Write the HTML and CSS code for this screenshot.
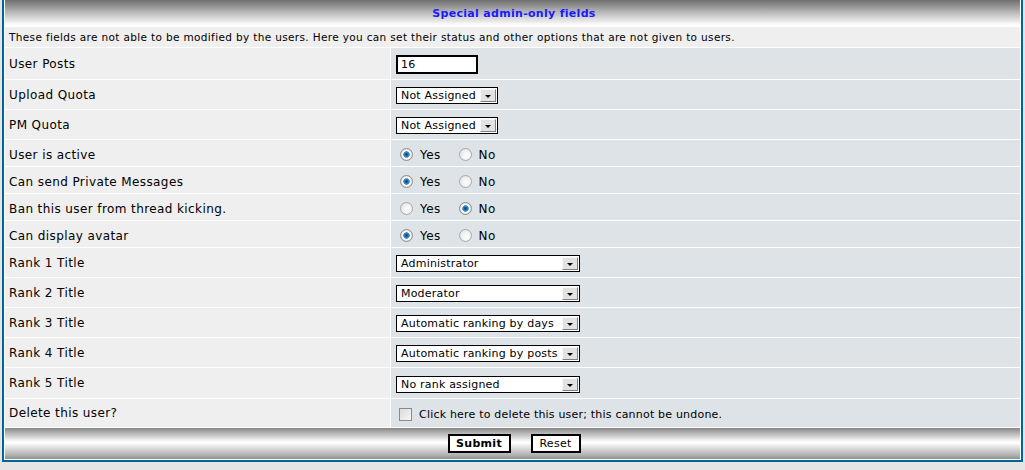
FILE: index.html
```html
<!DOCTYPE html>
<html>
<head>
<meta charset="utf-8">
<title>Special admin-only fields</title>
<link rel="stylesheet" href="styles.css">
</head>
<body>
<div class="page">
<table class="forumline">
  <colgroup><col class="c-label"><col class="c-value"></colgroup>
  <tr class="r-head"><th colspan="2">Special admin-only fields</th></tr>
  <tr class="r-desc"><td colspan="2" class="row1 gensmall">These fields are not able to be modified by the users. Here you can set their status and other options that are not given to users.</td></tr>
  <tr class="r-input">
    <td class="row1 gen">User Posts</td>
    <td class="row2"><input class="post" type="text" value="16"></td>
  </tr>
  <tr class="r-select">
    <td class="row1 gen">Upload Quota</td>
    <td class="row2"><span class="select w-quota"><span class="opt">Not Assigned</span><span class="btn"><i class="arrow"></i></span></span></td>
  </tr>
  <tr class="r-select">
    <td class="row1 gen">PM Quota</td>
    <td class="row2"><span class="select w-quota"><span class="opt">Not Assigned</span><span class="btn"><i class="arrow"></i></span></span></td>
  </tr>
  <tr class="r-radio">
    <td class="row1 gen">User is active</td>
    <td class="row2 gen"><span class="choice"><input class="radio" type="radio" name="active" checked><span>Yes</span></span><span class="choice"><input class="radio" type="radio" name="active"><span>No</span></span></td>
  </tr>
  <tr class="r-radio">
    <td class="row1 gen">Can send Private Messages</td>
    <td class="row2 gen"><span class="choice"><input class="radio" type="radio" name="pm" checked><span>Yes</span></span><span class="choice"><input class="radio" type="radio" name="pm"><span>No</span></span></td>
  </tr>
  <tr class="r-radio">
    <td class="row1 gen">Ban this user from thread kicking.</td>
    <td class="row2 gen"><span class="choice"><input class="radio" type="radio" name="kick"><span>Yes</span></span><span class="choice"><input class="radio" type="radio" name="kick" checked><span>No</span></span></td>
  </tr>
  <tr class="r-radio">
    <td class="row1 gen">Can display avatar</td>
    <td class="row2 gen"><span class="choice"><input class="radio" type="radio" name="avatar" checked><span>Yes</span></span><span class="choice"><input class="radio" type="radio" name="avatar"><span>No</span></span></td>
  </tr>
  <tr class="r-select">
    <td class="row1 gen">Rank 1 Title</td>
    <td class="row2"><span class="select w-rank"><span class="opt">Administrator</span><span class="btn"><i class="arrow"></i></span></span></td>
  </tr>
  <tr class="r-select">
    <td class="row1 gen">Rank 2 Title</td>
    <td class="row2"><span class="select w-rank"><span class="opt">Moderator</span><span class="btn"><i class="arrow"></i></span></span></td>
  </tr>
  <tr class="r-select">
    <td class="row1 gen">Rank 3 Title</td>
    <td class="row2"><span class="select w-rank"><span class="opt">Automatic ranking by days</span><span class="btn"><i class="arrow"></i></span></span></td>
  </tr>
  <tr class="r-select">
    <td class="row1 gen">Rank 4 Title</td>
    <td class="row2"><span class="select w-rank"><span class="opt">Automatic ranking by posts</span><span class="btn"><i class="arrow"></i></span></span></td>
  </tr>
  <tr class="r-select r-last">
    <td class="row1 gen">Rank 5 Title</td>
    <td class="row2"><span class="select w-rank"><span class="opt">No rank assigned</span><span class="btn"><i class="arrow"></i></span></span></td>
  </tr>
  <tr class="r-delete">
    <td class="row1 gen">Delete this user?</td>
    <td class="row2 gen"><span class="choice choice-del"><input class="check" type="checkbox"><span class="del-text">Click here to delete this user; this cannot be undone.</span></span></td>
  </tr>
  <tr class="r-foot">
    <td colspan="2" class="catBottom"><div class="buttons"><input type="submit" class="mainoption" value="Submit"><input type="reset" class="liteoption" value="Reset"></div></td>
  </tr>
</table>
</div>
</body>
</html>
```
FILE: styles.css
```css
html, body {
  margin: 0;
  padding: 0;
  background: #E5E5E5;
}
body {
  font-family: "DejaVu Sans", Verdana, sans-serif;
  color: #000;
}
.page {
  padding: 0 0 0 2px;
  margin-top: -1px;
}
.forumline {
  width: 1021px;
  table-layout: fixed;
  border-collapse: separate;
  border-spacing: 1px;
  background: #FFFFFF;
  border: 2px solid #006699;
  border-top-width: 0;
}
.c-label { width: 385px; }
.forumline td, .forumline th {
  padding: 0 4px;
  vertical-align: middle;
}
.r-head th {
  height: 26px;
  padding: 0 0 0 3px;
  font-size: 11px;
  font-weight: bold;
  letter-spacing: 0.3px;
  color: #1a1aff;
  text-align: center;
  background: linear-gradient(#6f6f6f 0%, #8d8d8d 20%, #b5b5b5 45%, #d9d9d9 70%, #eeeeee 86%, #fbfbfb 92%, #ffffff 100%);
}
.row1 { background: #EFEFEF; }
.row2 { background: #DEE3E7; }
.gen { font-size: 12px; letter-spacing: 0.4px; }
.gensmall { font-size: 10.5px; letter-spacing: 0.35px; }
.r-desc { height: 20px; }
.r-input { height: 31px; }
.r-select { height: 29px; }
.r-last { height: 30px; }
.r-radio { height: 26px; }
.r-radio td { padding-top: 3px; }
.r-delete { height: 28px; }
.r-delete td.row2 { padding-top: 2px; }
.r-foot { height: 31px; }

input.post {
  box-sizing: border-box;
  width: 82px;
  height: 19px;
  margin: 0 0 0 1px;
  padding: 0 0 0 3px;
  border: 2px solid #000;
  background: #fff;
  font-family: "DejaVu Sans", Verdana, sans-serif;
  font-size: 11px;
  letter-spacing: 0.3px;
  color: #000;
  vertical-align: middle;
}

.select {
  box-sizing: border-box;
  display: inline-flex;
  align-items: stretch;
  height: 17px;
  margin-left: 1px;
  border: 1px solid #000;
  background: #fff;
  font-size: 11px;
  letter-spacing: 0.2px;
  vertical-align: middle;
}
.w-quota { width: 102px; }
.w-rank { width: 184px; }
.select .opt {
  flex: 1;
  padding-left: 4px;
  line-height: 15px;
  white-space: nowrap;
  overflow: hidden;
}
.select .btn {
  display: flex;
  align-items: flex-end;
  justify-content: center;
  box-sizing: border-box;
  width: 16px;
  margin: 1px;
  padding-bottom: 3px;
  border: 1px solid;
  border-color: #f8f8f8 #808080 #808080 #f8f8f8;
  background: #e2e2e2;
}
.arrow {
  display: block;
  width: 0;
  height: 0;
  border-left: 3px solid transparent;
  border-right: 3px solid transparent;
  border-top: 3px solid #000;
}

.choice {
  display: inline-flex;
  align-items: center;
  gap: 7px;
  margin-right: 13px;
  vertical-align: middle;
}
.radio {
  appearance: none;
  -webkit-appearance: none;
  box-sizing: border-box;
  width: 13px;
  height: 13px;
  margin: 0 0 0 5px;
  border-radius: 50%;
  border: 1px solid #a8a8a8;
  background: radial-gradient(circle at 60% 60%, #ffffff 0, #f4f4f4 40%, #dcdcdc 100%);
}
.radio:checked {
  border-color: #8e8e8e;
  background: radial-gradient(circle at 50% 50%, #0a3f6e 0, #1c69a8 1.5px, #4c9bd6 3px, #ffffff 3.6px, #f2f2f2 4.5px, #d4d4d4 6px);
}
.check {
  appearance: none;
  -webkit-appearance: none;
  box-sizing: border-box;
  width: 13px;
  height: 13px;
  margin: 0 0 0 4px;
  border: 1px solid #8a8a8a;
  background: linear-gradient(135deg, #dcdcdc, #f6f6f6);
}
.choice-del { gap: 7px; }
.del-text { font-size: 11px; letter-spacing: 0.2px; }

.catBottom {
  background: linear-gradient(#868686 0%, #a9a9a9 12%, #d2d2d2 28%, #f4f4f4 40%, #ffffff 48%, #eaeaea 58%, #cfcfcf 72%, #b0b0b0 88%, #8f8f8f 100%);
}
.buttons {
  display: flex;
  justify-content: center;
  gap: 20px;
  padding-left: 3px;
}
.mainoption, .liteoption {
  box-sizing: border-box;
  height: 19px;
  margin: 0;
  padding: 0;
  border: 2px solid #000;
  background: #fff;
  color: #000;
  font-family: "DejaVu Sans", Verdana, sans-serif;
  font-size: 11px;
  letter-spacing: 0.3px;
}
.mainoption { width: 63px; font-weight: bold; }
.liteoption { width: 50px; }
```
